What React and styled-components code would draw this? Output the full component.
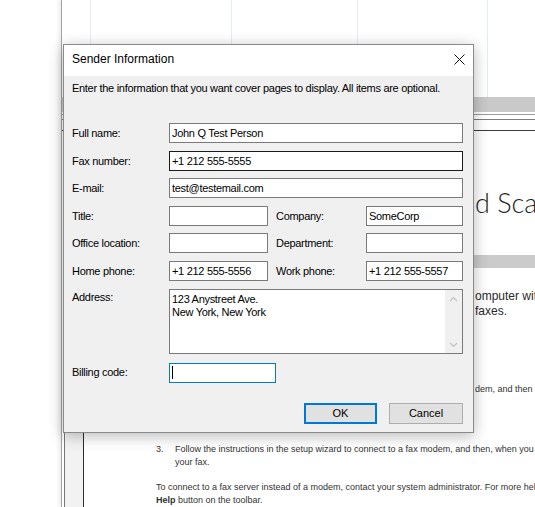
import React from 'react'
import styled, { createGlobalStyle } from 'styled-components'

const GlobalStyle = createGlobalStyle`
  html, body, #root {
    margin: 0;
    height: 100%;
  }
  body {
    background: #ffffff;
    overflow: hidden;
  }
`

const Desktop = styled.div`
  position: relative;
  width: 535px;
  height: 507px;
  overflow: hidden;
  padding-left: 61px;
  box-sizing: border-box;
  background: #ffffff;
`

const DocWindow = styled.div`
  height: 100%;
  border-left: 1px solid #a3a3a3;
  box-shadow: -3px 0 3px rgba(0, 0, 0, 0.06);
  display: flex;
  flex-direction: column;
  overflow: hidden;
  font-family: "Liberation Sans", Arial, sans-serif;
`

const Ribbon = styled.div`
  height: 97px;
  display: flex;
  flex-shrink: 0;
`

const RibbonCell = styled.div`
  width: ${(p) => p.$w}px;
  flex-shrink: 0;
  border-left: ${(p) => (p.$first ? 'none' : '1px solid #e4ebf4')};
`

const Band = styled.div`
  height: ${(p) => p.$h}px;
  background: #c9c9c9;
  flex-shrink: 0;
`

const Rules = styled.div`
  height: 19px;
  flex-shrink: 0;
  padding-top: 2px;
  box-sizing: border-box;
  border-bottom: 1px solid #3c3c3c;
`

const Rule = styled.div`
  height: 1px;
  background: ${(p) => p.$color};
  margin-bottom: ${(p) => p.$gap}px;
`

const DocBody = styled.div`
  flex: 1;
  display: flex;
`

const NavPane = styled.div`
  width: 18px;
  margin-left: 2px;
  border-left: 1px solid #777;
  border-right: 1px solid #2e2e2e;
  background: #f2f2f2;
  flex-shrink: 0;
`

const Page = styled.div`
  flex: 1;
  padding-left: 72px;
  color: #333;
  font-size: 9px;
  line-height: 13px;
  white-space: nowrap;
`

const Heading = styled.h1`
  margin: 57px 0 0;
  font-family: Lato, "Open Sans", sans-serif;
  font-weight: 300;
  font-size: 27px;
  line-height: 30px;
  color: #1e1e1e;
`

const Covered = styled.span`
  display: inline-block;
  width: ${(p) => p.$w}px;
  overflow: hidden;
  vertical-align: top;
`

const PageBand = styled.div`
  height: 13px;
  margin-top: ${(p) => p.$top}px;
  background: #cbcbcb;
  margin-left: -72px;
`

const Para = styled.p`
  margin: ${(p) => p.$top}px 0 0;
`

const Lead = styled.p`
  margin: ${(p) => p.$top}px 0 0;
  font-size: 12px;
  line-height: 15px;
  color: #2a2a2a;
`

const Item = styled.div`
  display: flex;
  margin-top: ${(p) => p.$top}px;
`

const Num = styled.span`
  width: 19px;
  flex-shrink: 0;
`

const Dialog = styled.div`
  position: absolute;
  left: 63px;
  top: 44px;
  width: 411px;
  height: 389px;
  box-sizing: border-box;
  border: 1px solid #8a8a8a;
  background: #f0f0f0;
  box-shadow: 0 3px 14px rgba(0, 0, 0, 0.28);
  display: flex;
  flex-direction: column;
  font-family: "Microsoft Sans Serif", "Liberation Sans", Arial, sans-serif;
  font-size: 11px;
  letter-spacing: -0.3px;
  color: #000;
`

const TitleBar = styled.div`
  height: 31px;
  box-sizing: border-box;
  background: #fff;
  display: flex;
  align-items: center;
  justify-content: space-between;
  padding: 0 1px 3px 8px;
  flex-shrink: 0;
`

const Title = styled.span`
  font-family: "Liberation Sans", Arial, sans-serif;
  font-size: 12px;
  letter-spacing: 0;
`

const CloseBtn = styled.div`
  width: 26px;
  height: 28px;
  display: flex;
  align-items: center;
  justify-content: center;
`

const Body = styled.div`
  flex: 1;
  padding: 6px 9px 0 8px;
`

const Intro = styled.div`
  line-height: 13px;
`

const Form = styled.div`
  margin-top: 28px;
  display: grid;
  grid-template-columns: 97px 99px 98px 97px;
  row-gap: 7.6px;
  align-items: center;
`

const Label = styled.label`
  padding-left: ${(p) => (p.$inner ? 8 : 0)}px;
  align-self: ${(p) => (p.$top ? 'start' : 'center')};
  padding-top: ${(p) => (p.$top ? 2 : 0)}px;
  white-space: nowrap;
`

const TextBox = styled.input`
  grid-column: span ${(p) => p.$span || 1};
  height: 20px;
  box-sizing: border-box;
  border: 1px solid ${(p) => p.$border || '#7a7a7a'};
  background: #fff;
  padding: 0 2px;
  margin: 0;
  font: inherit;
  letter-spacing: inherit;
  color: #000;
  outline: none;
`

const AddressBox = styled.div`
  grid-column: span 3;
  height: 65px;
  box-sizing: border-box;
  border: 1px solid #7a7a7a;
  background: #fff;
  display: flex;
  margin-top: 0.5px;
`

const AddressText = styled.textarea`
  flex: 1;
  border: none;
  resize: none;
  overflow: hidden;
  padding: 3px 2px 0;
  margin: 0;
  font: inherit;
  letter-spacing: inherit;
  line-height: 13px;
  color: #000;
  background: transparent;
  outline: none;
`

const ScrollTrack = styled.div`
  width: 17px;
  background: #f0f0f0;
  display: flex;
  flex-direction: column;
  justify-content: space-between;
  align-items: center;
  padding: 6px 0 5px;
`

const BillingBox = styled.div`
  height: 20px;
  width: 107px;
  box-sizing: border-box;
  border: 1px solid #0078d7;
  background: #fff;
  display: flex;
  align-items: center;
  padding-left: 2px;
  margin-top: 1px;
`

const Caret = styled.span`
  width: 1px;
  height: 13px;
  background: #000;
`

const BillingInput = styled.input`
  flex: 1;
  min-width: 0;
  border: none;
  padding: 0;
  font: inherit;
  background: transparent;
  outline: none;
`

const Buttons = styled.div`
  margin-top: 20px;
  display: flex;
  justify-content: flex-end;
  gap: 12px;
  padding-right: 1px;
`

const Button = styled.button`
  width: ${(p) => p.$w}px;
  height: 21px;
  box-sizing: border-box;
  background: #e1e1e1;
  border: ${(p) => (p.$primary ? '2px solid #0078d7' : '1px solid #adadad')};
  font: inherit;
  letter-spacing: 0;
  color: #000;
  padding: 0;
`

const Chevron = ({ up }) => (
  <svg width="9" height="6" viewBox="0 0 9 6">
    <path
      d={up ? 'M1 5 L4.5 1.5 L8 5' : 'M1 1 L4.5 4.5 L8 1'}
      fill="none"
      stroke="#c2c2c2"
      strokeWidth="1.2"
    />
  </svg>
)

function SenderDialog() {
  return (
    <Dialog>
      <TitleBar>
        <Title>Sender Information</Title>
        <CloseBtn>
          <svg width="11" height="11" viewBox="0 0 11 11">
            <path d="M0.5 0.5 L10.5 10.5 M10.5 0.5 L0.5 10.5" stroke="#111" strokeWidth="1" />
          </svg>
        </CloseBtn>
      </TitleBar>
      <Body>
        <Intro>Enter the information that you want cover pages to display. All items are optional.</Intro>
        <Form>
          <Label>Full name:</Label>
          <TextBox $span={3} defaultValue="John Q Test Person" readOnly />
          <Label>Fax number:</Label>
          <TextBox $span={3} $border="#1a1a1a" defaultValue="+1 212 555-5555" readOnly />
          <Label>E-mail:</Label>
          <TextBox $span={3} defaultValue="test@testemail.com" readOnly />
          <Label>Title:</Label>
          <TextBox defaultValue="" readOnly />
          <Label $inner>Company:</Label>
          <TextBox defaultValue="SomeCorp" readOnly />
          <Label>Office location:</Label>
          <TextBox defaultValue="" readOnly />
          <Label $inner>Department:</Label>
          <TextBox defaultValue="" readOnly />
          <Label>Home phone:</Label>
          <TextBox defaultValue="+1 212 555-5556" readOnly />
          <Label $inner>Work phone:</Label>
          <TextBox defaultValue="+1 212 555-5557" readOnly />
          <Label $top>Address:</Label>
          <AddressBox>
            <AddressText defaultValue={'123 Anystreet Ave.\nNew York, New York'} readOnly />
            <ScrollTrack>
              <Chevron up />
              <Chevron />
            </ScrollTrack>
          </AddressBox>
          <Label>Billing code:</Label>
          <BillingBox>
            <Caret />
            <BillingInput defaultValue="" readOnly />
          </BillingBox>
        </Form>
        <Buttons>
          <Button $primary $w={73}>OK</Button>
          <Button $w={74}>Cancel</Button>
        </Buttons>
      </Body>
    </Dialog>
  )
}

function App() {
  return (
    <Desktop>
      <GlobalStyle />
      <DocWindow>
        <Ribbon>
          <RibbonCell $first $w={28} />
          <RibbonCell $w={140} />
          <RibbonCell $w={125} />
          <RibbonCell $w={129} />
          <RibbonCell $w={80} />
        </Ribbon>
        <Band $h={15} />
        <Rules>
          <Rule $color="#9a9a9a" $gap={4} />
          <Rule $color="#7c7c7c" $gap={0} />
        </Rules>
        <DocBody>
          <NavPane />
          <Page>
            <Heading>
              <Covered $w={319}>Set up Windows Fax an</Covered>d Scan
            </Heading>
            <PageBand $top={37} />
            <Lead $top={20.5}>
              <Covered $w={319}>Before you can send a fax, set up your c</Covered>omputer with a fax modem.
              <br />
              <Covered $w={319}>You can then send and receive </Covered>faxes.
            </Lead>
            <Item $top={64}>
              <Num>2.</Num>
              <span>
                <Covered $w={300}>Click New Fax and choose to connect to a fax mo</Covered>dem, and then type a name for the modem.
              </span>
            </Item>
            <Item $top={47}>
              <Num>3.</Num>
              <span>
                Follow the instructions in the setup wizard to connect to a fax modem, and then, when you are ready, send
                <br />
                your fax.
              </span>
            </Item>
            <Para $top={12}>
              To connect to a fax server instead of a modem, contact your system administrator. For more help, click the
              <br />
              <b>Help</b> button on the toolbar.
            </Para>
          </Page>
        </DocBody>
      </DocWindow>
      <SenderDialog />
    </Desktop>
  )
}

export default App
